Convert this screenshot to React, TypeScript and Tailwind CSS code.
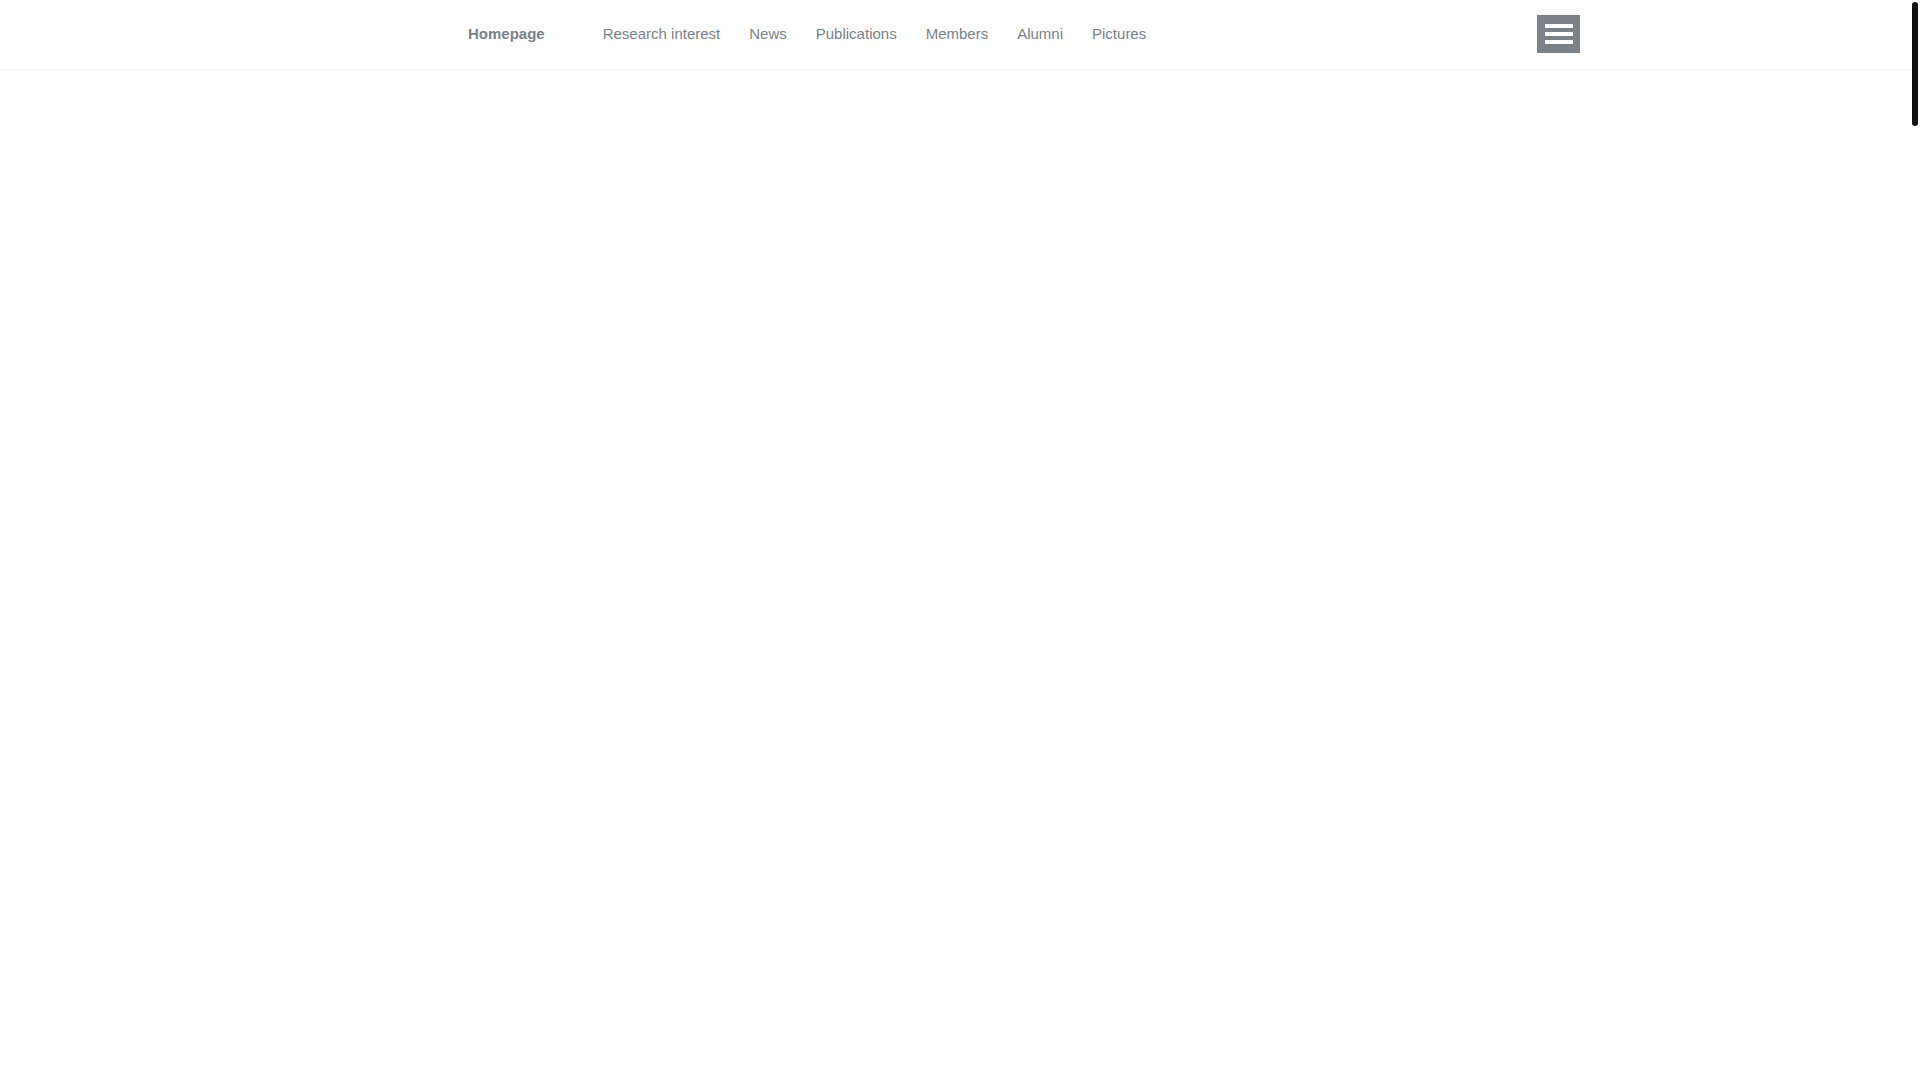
import React from 'react';

const links = ['Research interest', 'News', 'Publications', 'Members', 'Alumni', 'Pictures'];

export default function App() {
  return (
    <div className="relative min-h-screen bg-white pr-[10px] font-['Liberation_Sans',Arial,sans-serif]">
      <header className="border-b border-[#f0f0f0] pl-[138px]">
        <div className="mx-auto flex max-w-[1112px] items-center justify-between pt-[15px] pb-4 text-[#7a8288]">
          <nav className="flex items-center gap-[58px] text-[15px] leading-6">
            <a href="#home" className="font-bold">Homepage</a>
            <ul className="flex gap-[29px]">
              {links.map((label) => (
                <li key={label}>
                  <a href={`#${label.toLowerCase().replace(' ', '-')}`}>{label}</a>
                </li>
              ))}
            </ul>
          </nav>
          <button type="button" aria-label="Toggle menu" className="flex h-[38px] w-[43px] flex-col items-center justify-center gap-1 bg-[#7a8288]">
            <span className="h-1 w-7 bg-white" />
            <span className="h-1 w-7 bg-white" />
            <span className="h-1 w-7 bg-white" />
          </button>
        </div>
      </header>

      {/* Scroll position thumb */}
      <div className="absolute top-[2px] right-[2px] h-[124px] w-[6px] rounded-full bg-[#111111]" />
    </div>
  );
}
